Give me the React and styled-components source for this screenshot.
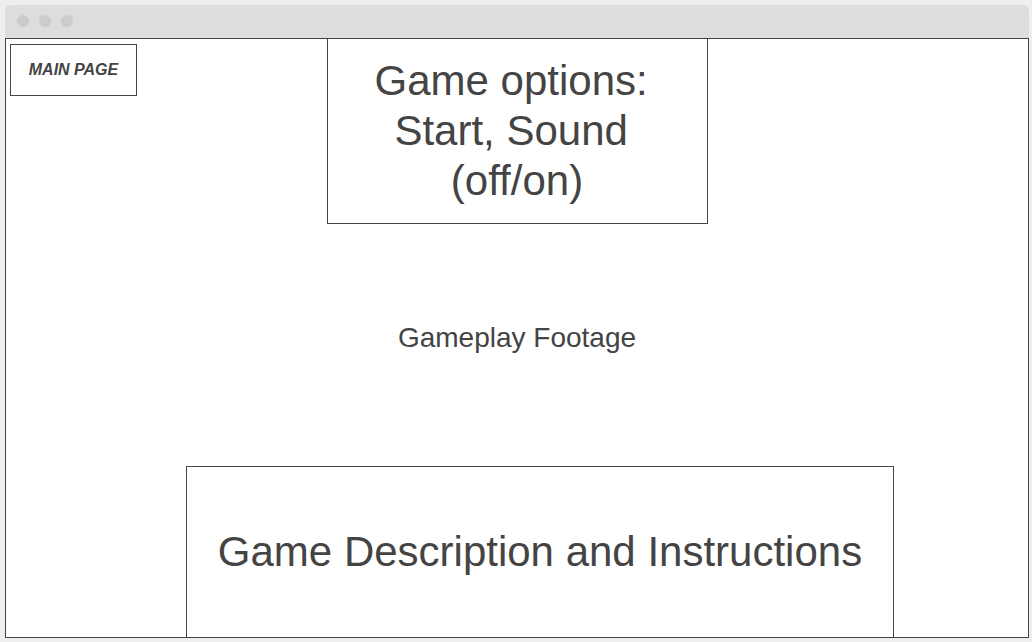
import React from "react"
import styled, { createGlobalStyle } from "styled-components"

const GlobalStyle = createGlobalStyle`
  html, body {
    margin: 0;
    padding: 0;
    background: #eeeeee;
    font-family: "Liberation Sans", Arial, sans-serif;
    color: #444444;
  }
`

const Page = styled.div`
  width: 1032px;
  height: 642px;
  padding: 5px 3px 0 5px;
  box-sizing: border-box;
  overflow: hidden;
`

const Window = styled.div`
  width: 1024px;
  display: flex;
  flex-direction: column;
`

const TitleBar = styled.div`
  height: 33px;
  background: #dddddd;
  border-radius: 6px 6px 0 0;
  display: flex;
  align-items: center;
  gap: 10px;
  padding-left: 12px;
  padding-bottom: 1px;
  box-sizing: border-box;
`

const Dot = styled.span`
  width: 12px;
  height: 12px;
  border-radius: 50%;
  background: #cccccc;
`

const Content = styled.div`
  height: 600px;
  border: 1px solid #444444;
  background: #ffffff;
  box-sizing: border-box;
  overflow: hidden;
  display: flex;
  flex-direction: column;
  & > * {
    flex-shrink: 0;
  }
`

const TopRow = styled.div`
  display: grid;
  grid-template-columns: 1fr auto 1fr;
  align-items: start;
`

const MainPageButton = styled.div`
  margin: 5px 0 0 4px;
  width: 127px;
  height: 52px;
  border: 1px solid #444444;
  box-sizing: border-box;
  display: flex;
  align-items: center;
  justify-content: center;
  font-size: 16px;
  font-weight: bold;
  font-style: italic;
  padding-bottom: 1px;
`

const OptionsBox = styled.div`
  width: 381px;
  height: 185px;
  border: 1px solid #444444;
  border-top: none;
  box-sizing: border-box;
  display: flex;
  align-items: center;
  justify-content: center;
  text-align: center;
  font-size: 42px;
  line-height: 50px;
  padding-bottom: 1px;
`

const Footage = styled.div`
  height: 242px;
  box-sizing: border-box;
  padding-top: 98px;
  text-align: center;
  font-size: 28px;
  line-height: 32px;
`

const DescriptionBox = styled.div`
  margin-left: 180px;
  width: 708px;
  height: 200px;
  border: 1px solid #444444;
  box-sizing: border-box;
  padding-top: 60px;
  text-align: center;
  font-size: 42px;
  line-height: 50px;
`

export default function App() {
  return (
    <Page>
      <GlobalStyle />
      <Window>
        <TitleBar>
          <Dot />
          <Dot />
          <Dot />
        </TitleBar>
        <Content>
          <TopRow>
            <div>
              <MainPageButton>MAIN PAGE</MainPageButton>
            </div>
            <OptionsBox>
              <div>
                Game options:{"\u00a0"}
                <br />
                Start, Sound{"\u00a0"}
                <br />
                (off/on)
              </div>
            </OptionsBox>
            <div />
          </TopRow>
          <Footage>Gameplay Footage</Footage>
          <DescriptionBox>Game Description and Instructions</DescriptionBox>
        </Content>
      </Window>
    </Page>
  )
}
